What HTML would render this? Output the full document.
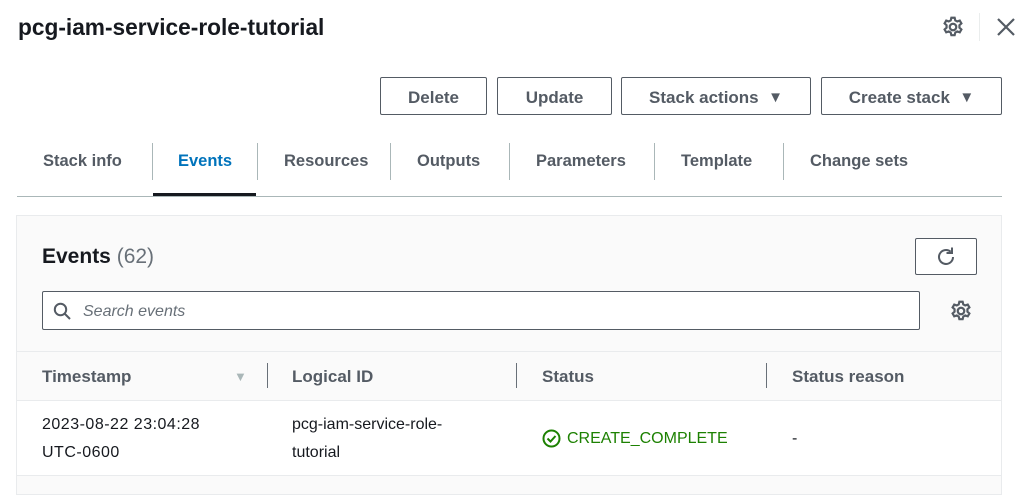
<!DOCTYPE html>
<html><head><meta charset="utf-8"><style>
*{box-sizing:border-box;margin:0;padding:0}
body{width:1033px;height:487px;overflow:hidden;background:#fff;font-family:"Liberation Sans",Arial,sans-serif;color:#16191f;position:relative}
.a{position:absolute}
.btn{position:absolute;top:77px;height:38px;border:1px solid #545b64;border-radius:2px;font-weight:bold;font-size:17px;color:#545b64;display:flex;align-items:center;justify-content:center;background:#fff;padding-top:3px}
.tab{position:absolute;top:152px;font-weight:bold;font-size:16.5px;color:#545b64}
.sep{position:absolute;top:143px;width:1px;height:37px;background:#aab7b8}
.th{position:absolute;top:367px;font-weight:bold;font-size:17px;color:#545b64}
.tsep{position:absolute;top:363px;width:1px;height:25px;background:#687078}
.td{position:absolute;font-size:16px;color:#16191f;line-height:28px}
</style></head><body>
<div class="a" style="left:18px;top:14px;font-size:22.7px;font-weight:bold">pcg-iam-service-role-tutorial</div>
<svg class="a" style="left:941px;top:15px" width="24" height="24" viewBox="0 0 22 22"><g fill="none" stroke="#545b64" stroke-width="2"><circle cx="11" cy="11" r="3"/><path d="M9.5 2.5h3l.6 2.4 1.8 1 2.3-.8 1.5 2.6-1.8 1.7v2.2l1.8 1.7-1.5 2.6-2.3-.8-1.8 1-.6 2.4h-3l-.6-2.4-1.8-1-2.3.8-1.500-2.6 1.8-1.7V9.4L3.3 7.7l1.5-2.6 2.3.8 1.8-1z"/></g></svg>
<div class="a" style="left:979px;top:13px;width:1px;height:28px;background:#eaeded"></div>
<svg class="a" style="left:996px;top:17px" width="20" height="20"><path d="M2 2L18 18M18 2L2 18" stroke="#545b64" stroke-width="2.2"/></svg>

<div class="btn" style="left:380px;width:107px">Delete</div>
<div class="btn" style="left:497px;width:115px">Update</div>
<div class="btn" style="left:621px;width:190px">Stack actions&nbsp;&nbsp;<span style="font-size:15px">▼</span></div>
<div class="btn" style="left:821px;width:181px">Create stack&nbsp;&nbsp;<span style="font-size:15px">▼</span></div>

<div class="tab" style="left:43px">Stack info</div>
<div class="sep" style="left:152px"></div>
<div class="tab" style="left:178px;color:#0073bb">Events</div>
<div class="sep" style="left:257px"></div>
<div class="tab" style="left:284px">Resources</div>
<div class="sep" style="left:390px"></div>
<div class="tab" style="left:417px">Outputs</div>
<div class="sep" style="left:509px"></div>
<div class="tab" style="left:536px">Parameters</div>
<div class="sep" style="left:654px"></div>
<div class="tab" style="left:681px">Template</div>
<div class="sep" style="left:783px"></div>
<div class="tab" style="left:810px">Change sets</div>
<div class="a" style="left:17px;top:196px;width:985px;height:1px;background:#aab7b8"></div>
<div class="a" style="left:153px;top:193px;width:103px;height:3px;background:#16191f"></div>

<div class="a" style="left:16px;top:215px;width:986px;height:280px;background:#fafafa;border:1px solid #e9ebed"></div>
<div class="a" style="left:42px;top:245px;font-size:21px;font-weight:bold">Events <span style="font-weight:normal;color:#687078">(62)</span></div>
<div class="a" style="left:915px;top:238px;width:62px;height:37px;border:1px solid #545b64;border-radius:2px;background:#fff"></div>
<svg class="a" style="left:934px;top:245px" width="24" height="24"><path d="M19 12a7 7 0 1 1-2.3-5.2" fill="none" stroke="#545b64" stroke-width="2"/><path d="M18 2.5v5.5h-5.5" fill="none" stroke="#545b64" stroke-width="2"/></svg>
<div class="a" style="left:42px;top:291px;width:878px;height:39px;border:1px solid #545b64;border-radius:2px;background:#fff"></div>
<svg class="a" style="left:53px;top:302px" width="19" height="19"><circle cx="7.5" cy="7.5" r="5.7" fill="none" stroke="#545b64" stroke-width="2"/><path d="M11.5 11.5L17 17" stroke="#545b64" stroke-width="2"/></svg>
<div class="a" style="left:83px;top:303px;font-size:16px;font-style:italic;color:#687078">Search events</div>
<svg class="a" style="left:949px;top:299px" width="24" height="24" viewBox="0 0 22 22"><g fill="none" stroke="#545b64" stroke-width="2"><circle cx="11" cy="11" r="3"/><path d="M9.5 2.5h3l.6 2.4 1.8 1 2.3-.8 1.5 2.6-1.8 1.7v2.2l1.8 1.7-1.5 2.6-2.3-.8-1.8 1-.6 2.4h-3l-.6-2.4-1.8-1-2.3.8-1.5-2.6 1.8-1.7V9.4L3.3 7.7l1.5-2.6 2.3.8 1.8-1z"/></g></svg>

<div class="a" style="left:17px;top:351px;width:984px;height:1px;background:#e9ebed"></div>
<div class="th" style="left:42px">Timestamp</div>
<div class="a" style="left:234px;top:369px;font-size:13px;color:#aab7b8">▼</div>
<div class="tsep" style="left:267px"></div>
<div class="th" style="left:292px">Logical ID</div>
<div class="tsep" style="left:516px"></div>
<div class="th" style="left:542px">Status</div>
<div class="tsep" style="left:766px"></div>
<div class="th" style="left:792px">Status reason</div>
<div class="a" style="left:17px;top:400px;width:984px;height:76px;background:#fff;border-top:1px solid #e9ebed;border-bottom:1px solid #e9ebed"></div>
<div class="td" style="left:42px;top:411px;letter-spacing:0.5px">2023-08-22 23:04:28<br>UTC-0600</div>
<div class="td" style="left:292px;top:411px">pcg-iam-service-role-<br>tutorial</div>
<svg class="a" style="left:542px;top:429px" width="19" height="19"><circle cx="9.5" cy="9.5" r="8" fill="none" stroke="#1d8102" stroke-width="2"/><path d="M5.5 9.5l3 3 5-5.5" fill="none" stroke="#1d8102" stroke-width="2"/></svg>
<div class="td" style="left:567px;top:425px;color:#1d8102">CREATE_COMPLETE</div>
<div class="td" style="left:792px;top:425px">-</div>
</body></html>
